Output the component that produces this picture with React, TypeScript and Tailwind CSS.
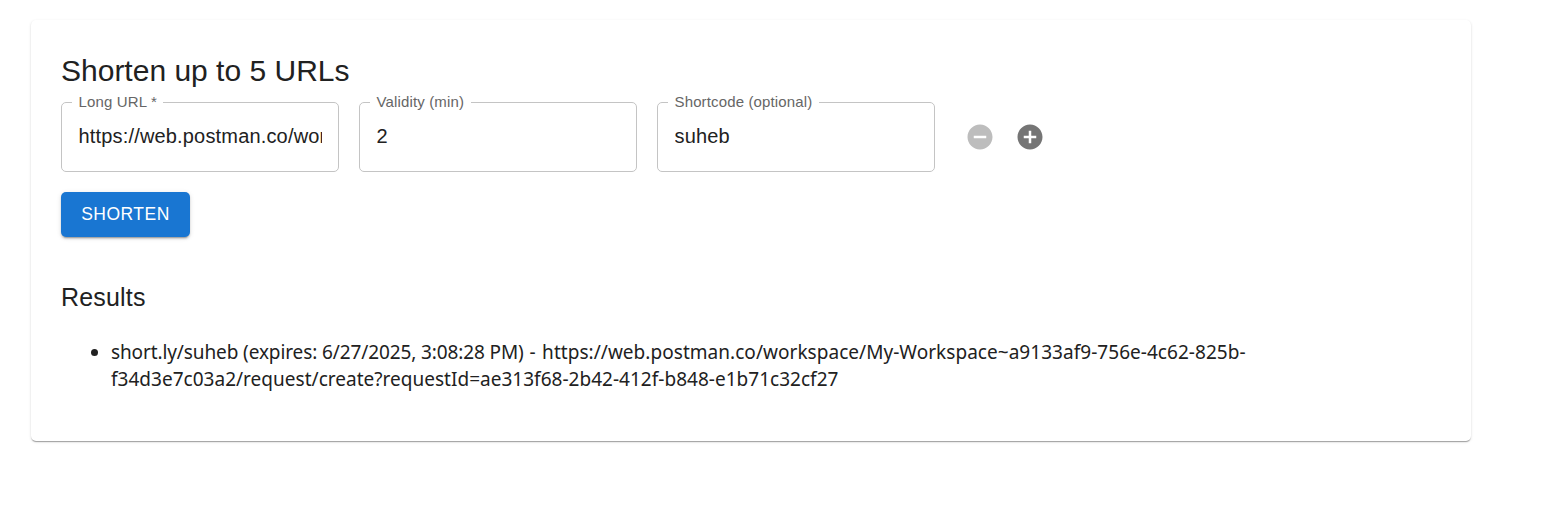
import { useState } from 'react';

type FieldProps = { label: string; initial: string; notch: string };

function Field({ label, initial, notch }: FieldProps) {
  const [value, setValue] = useState(initial);
  return (
    <label className="relative flex h-[70px] w-[278px] items-center px-[17.5px] pb-[2px]">
      <fieldset className="pointer-events-none absolute inset-x-0 -top-[7px] bottom-0 rounded-[5px] border border-[#c4c4c4] px-[10px]">
        <legend className={`h-[15px] ${notch}`} />
      </fieldset>
      <span className="absolute -top-[11px] left-[17.5px] whitespace-nowrap text-[15px] leading-[22px] tracking-[0.14px] text-[#666666]">
        {label}
      </span>
      <input
        className="w-full min-w-0 bg-transparent text-[20px] leading-[28px] tracking-[0.17px] text-[#212121] outline-none"
        value={value}
        onChange={(e) => setValue(e.target.value)}
      />
    </label>
  );
}

function RoundIcon({ d, color }: { d: string; color: string }) {
  return (
    <svg viewBox="0 0 24 24" className={`size-[30px] ${color}`} fill="currentColor">
      <path d={d} />
    </svg>
  );
}

export default function App() {
  return (
    <div className="min-h-[524px] bg-white pt-[20px] pl-[31px] font-['Liberation_Sans',Arial,sans-serif] text-[#212121]">
      <main className="h-[421px] w-[1440px] rounded-[5px] bg-white px-[30px] pt-[31px] pb-[29px] shadow-[0_2px_1px_-1px_rgba(0,0,0,0.2),0_1px_1px_0_rgba(0,0,0,0.14),0_1px_3px_0_rgba(0,0,0,0.12)]">
        <h1 className="text-[30px] leading-[40px]">Shorten up to 5 URLs</h1>
        <div className="mt-[11px] flex items-center gap-[20px]">
          <Field label="Long URL *" initial="https://web.postman.co/workspace/My-Workspace" notch="w-[91px]" />
          <Field label="Validity (min)" initial="2" notch="w-[101px]" />
          <Field label="Shortcode (optional)" initial="suheb" notch="w-[151px]" />
          <div className="flex">
            <button className="p-[10px]" disabled aria-label="Remove URL">
              <RoundIcon
                color="text-[#bdbdbd]"
                d="M12 2C6.48 2 2 6.48 2 12s4.48 10 10 10 10-4.48 10-10S17.52 2 12 2m5 11H7v-2h10z"
              />
            </button>
            <button className="p-[10px]" aria-label="Add URL">
              <RoundIcon
                color="text-[#757575]"
                d="M12 2C6.48 2 2 6.48 2 12s4.48 10 10 10 10-4.48 10-10S17.52 2 12 2m5 11h-4v4h-2v-4H7v-2h4V7h2v4h4z"
              />
            </button>
          </div>
        </div>
        <button className="mt-[20px] flex h-[45px] w-[129px] items-center justify-center rounded-[5px] bg-[#1976d2] pb-[2px] text-[17.5px] leading-[30px] font-medium tracking-[0.5px] text-white shadow-[0_3px_1px_-2px_rgba(0,0,0,0.2),0_2px_2px_0_rgba(0,0,0,0.14),0_1px_5px_0_rgba(0,0,0,0.12)]">
          SHORTEN
        </button>
        <h2 className="mt-[40px] text-[25px] leading-[40px] tracking-[0.19px]">Results</h2>
        <ul className="mt-[22px] list-disc pl-[50px] font-['Noto_Sans','Open_Sans',sans-serif] text-[19px] leading-[27px]">
          <li>
            <span className="whitespace-nowrap">
              <span className="tracking-[-0.11px]">short.ly/suheb (expires: 6/27/2025, 3:08:28 PM)</span>
              <span className="tracking-[0.8px]"> - </span>
              <span className="tracking-[0.04px]">
                https://web.postman.co/workspace/My-Workspace~a9133af9-756e-4c62-825b-
              </span>
            </span>
            <br />
            <span className="tracking-[0.02px] whitespace-nowrap">
              f34d3e7c03a2/request/create?requestId=ae313f68-2b42-412f-b848-e1b71c32cf27
            </span>
          </li>
        </ul>
      </main>
    </div>
  );
}
